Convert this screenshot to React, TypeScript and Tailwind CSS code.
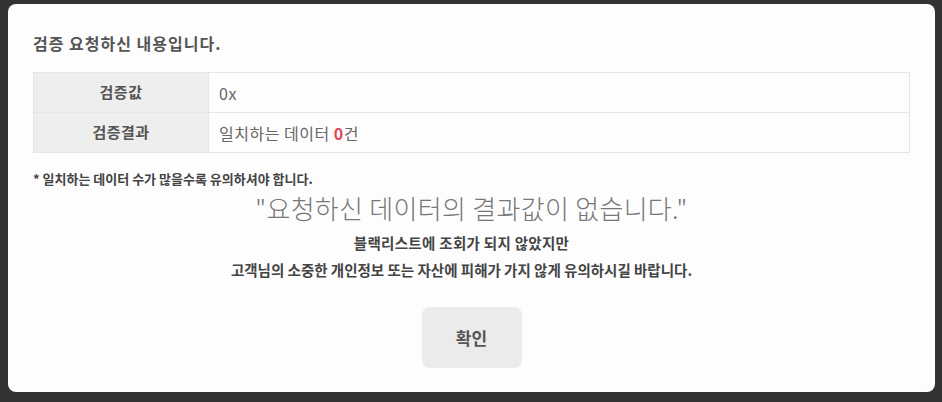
import React from "react";

const rows = [
  { label: "검증값", value: <span>0x</span> },
  {
    label: "검증결과",
    value: (
      <span>
        일치하는 데이터 <b className="font-bold text-[#e0435a]">0</b>건
      </span>
    ),
  },
];

const App: React.FC = () => {
  return (
    <div
      className="w-[942px] h-[402px] bg-[#333333] pt-1 pl-2 pr-[7px] pb-[10px]"
      style={{ fontFamily: '"Noto Sans CJK KR", "Noto Sans", sans-serif' }}
    >
      <div className="h-full bg-[#fdfdfd] rounded-lg px-[25px] pt-[29px]">
        <h2 className="text-[16px] tracking-[1px] font-bold text-[#555] leading-5">
          검증 요청하신 내용입니다.
        </h2>

        <table className="mt-[19px] w-[877px] border-collapse">
          <tbody>
            {rows.map((row) => (
              <tr key={row.label} className="h-10">
                <th className="w-[175px] border border-[#e6e6e6] bg-[#eeeeee] text-[15px] tracking-[0.5px] font-bold text-[#555] text-center">
                  {row.label}
                </th>
                <td className="border border-[#e6e6e6] bg-[#fdfdfd] pl-[10px] text-[16px] tracking-[0.5px] text-[#666]">
                  {row.value}
                </td>
              </tr>
            ))}
          </tbody>
        </table>

        <p className="mt-[18px] text-[13px] font-bold text-[#444] leading-4">
          * 일치하는 데이터 수가 많을수록 유의하셔야 합니다.
        </p>

        <div className="flex flex-col items-center">
          <p className="mt-[5px] text-[26px] tracking-[0.3px] font-light text-[#777] leading-8">
            "요청하신 데이터의 결과값이 없습니다."
          </p>
          <p className="mt-[10px] pr-5 text-[14.5px] tracking-[0.3px] font-bold text-[#444] leading-[18px]">
            블랙리스트에 조회가 되지 않았지만
          </p>
          <p className="mt-[9px] pr-5 text-[14.5px] font-bold text-[#444] leading-[18px]">
            고객님의 소중한 개인정보 또는 자산에 피해가 가지 않게 유의하시길 바랍니다.
          </p>
          <button className="mt-[28px] w-[100px] h-[61px] rounded-lg bg-[#ebebeb] text-[17px] font-bold text-[#555]">
            확인
          </button>
        </div>
      </div>
    </div>
  );
};

export default App;
